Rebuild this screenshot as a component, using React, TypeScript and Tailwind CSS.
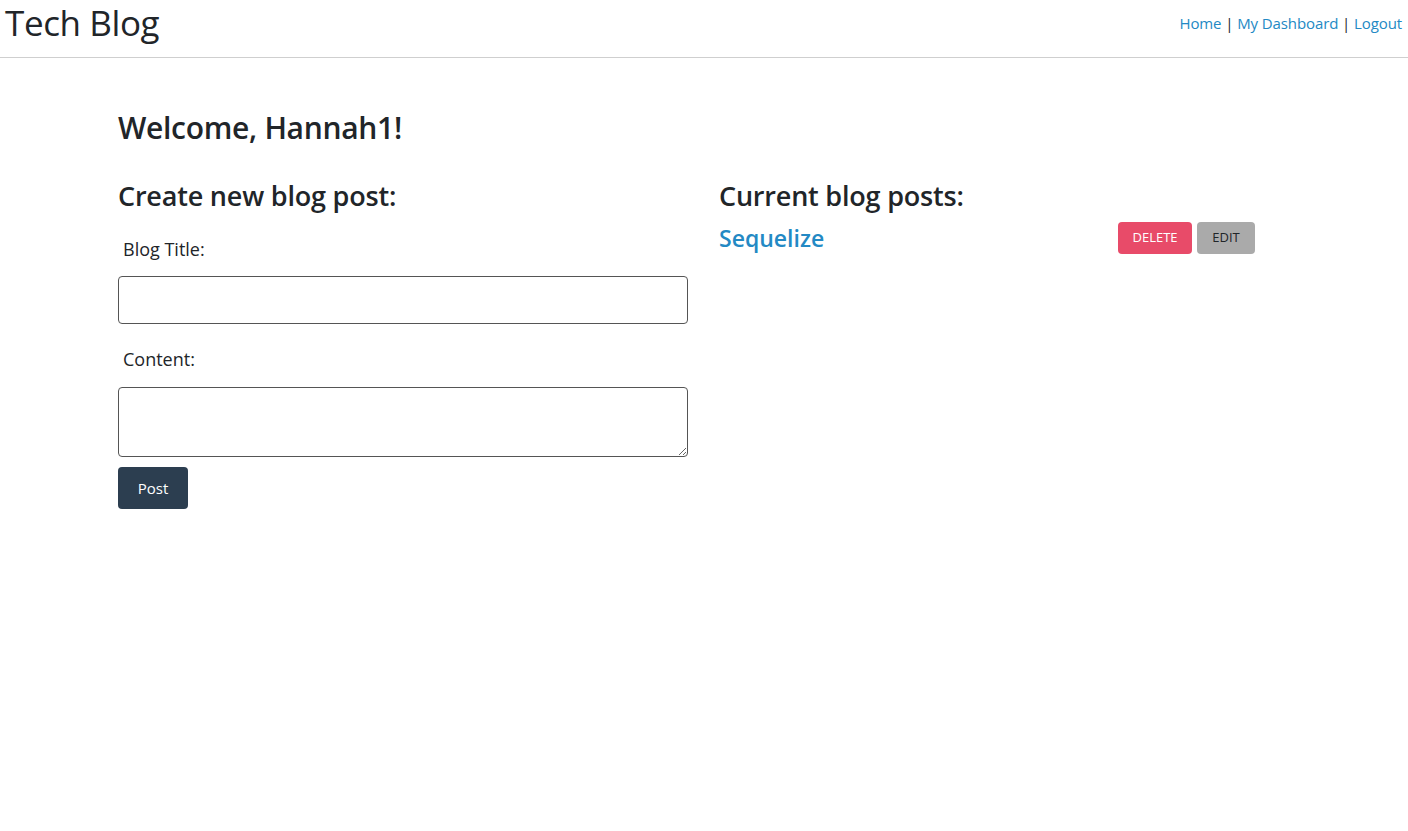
import { useState } from 'react'

interface Post {
  id: number
  title: string
}

export default function App() {
  const [title, setTitle] = useState('')
  const [content, setContent] = useState('')
  const [posts] = useState<Post[]>([{ id: 1, title: 'Sequelize' }])

  return (
    <div className="min-h-screen bg-white text-[#212529]" style={{ fontFamily: '"Open Sans", "Noto Sans", sans-serif' }}>
      {/* header */}
      <header className="flex items-start justify-between h-[58px] border-b border-[#cfcfcf]">
        <h1 className="pl-[5px] text-[35px] leading-[46px] font-medium tracking-[-0.4px]">Tech Blog</h1>
        <nav className="pr-[6px] pt-[11px] text-[15px] leading-[24px] tracking-[-0.1px]">
          <a href="#" className="text-[#2389c4]">Home</a>
          {' | '}
          <a href="#" className="text-[#2389c4]">My Dashboard</a>
          {' | '}
          <a href="#" className="text-[#2389c4]">Logout</a>
        </nav>
      </header>

      <main className="pl-[118px] pt-[50px]">
        <h2 className="text-[30px] leading-[40px] font-semibold tracking-[-0.3px]">Welcome, Hannah1!</h2>

        <div className="flex gap-[31px] mt-[30px]">
          {/* create post */}
          <section className="w-[570px]">
            <h3 className="text-[27px] leading-[36px] font-semibold tracking-[-0.2px]">Create new blog post:</h3>
            <form className="mt-[16px]" onSubmit={(e) => e.preventDefault()}>
              <label className="block pl-[5px] text-[18px] leading-[26px] py-[6px]">Blog Title:</label>
              <input
                type="text"
                value={title}
                onChange={(e) => setTitle(e.target.value)}
                className="block w-full h-[48px] mt-[8px] border border-[#555] rounded-[4px] px-3 outline-none"
              />
              <label className="block pl-[5px] text-[18px] leading-[26px] py-[6px] mt-[16px]">Content:</label>
              <textarea
                value={content}
                onChange={(e) => setContent(e.target.value)}
                className="block w-full h-[70px] mt-[9px] border border-[#555] rounded-[4px] px-3 outline-none"
              />
              <button type="submit" className="mt-[10px] w-[70px] h-[42px] bg-[#2c3e50] text-white text-[15px] rounded-[4px]">
                Post
              </button>
            </form>
          </section>

          {/* current posts */}
          <section className="w-[537px]">
            <h3 className="text-[27px] leading-[36px] font-semibold tracking-[-0.2px]">Current blog posts:</h3>
            {posts.map((post) => (
              <div key={post.id} className="flex items-center justify-between mt-[8px]">
                <a href="#" className="text-[23px] leading-[32px] font-semibold text-[#2389c4]">{post.title}</a>
                <div className="flex gap-[5px] pr-[1px]">
                  <button className="w-[74px] h-[32px] bg-[#e84b69] text-white text-[13px] rounded-[4px]">DELETE</button>
                  <button className="w-[58px] h-[32px] bg-[#aaaaaa] text-[#212529] text-[13px] rounded-[4px]">EDIT</button>
                </div>
              </div>
            ))}
          </section>
        </div>
      </main>
    </div>
  )
}
